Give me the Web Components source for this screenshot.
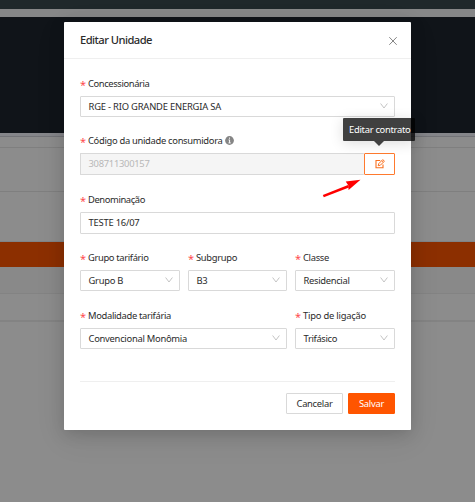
<!DOCTYPE html>
<html lang="pt-BR">
<head>
<meta charset="utf-8">
<title>Editar Unidade</title>
<style>
html,body{margin:0;height:100%;overflow:hidden}
body{font-family:"Noto Sans","Open Sans",sans-serif;font-size:9.4px;color:#2b2b2b;background:#8c8c8c}
</style>
</head>
<body>
<unit-page></unit-page>
<script>
const define = (name, html, init) => customElements.define(name, class extends HTMLElement {
  connectedCallback() {
    if (this.shadowRoot) return;
    const t = document.createElement('template');
    t.innerHTML = html;
    this.attachShadow({mode: 'open'}).append(t.content.cloneNode(true));
    if (init) init(this, this.shadowRoot);
  }
});

/* Text tracked so that it takes exactly the width given in "w". */
define('fit-text', `<style>:host{display:inline-block;white-space:nowrap;line-height:14px}span{display:inline-block}</style><span><slot></slot></span>`,
  (host, root) => {
    const s = root.querySelector('span'), w = +host.getAttribute('w');
    const natural = s.getBoundingClientRect().width;
    s.style.letterSpacing = (w - natural) / host.textContent.length + 'px';
    host.style.width = w + 'px';
  });

define('chevron-icon', `<style>:host{display:block;width:8px;height:6px}svg{display:block}</style>
<svg width="8" height="6" viewBox="0 0 8 6"><path d="M.6.5 4 5 7.4.5" fill="none" stroke="#bdbdbd" stroke-width=".9"/></svg>`);

define('select-box', `<style>:host{display:flex;box-sizing:border-box;height:21px;border:1px solid #d9d9d9;border-radius:1px;padding:3px 6px 0 7.5px;justify-content:space-between;background:#fff}
chevron-icon{margin-top:3px}</style><slot></slot><chevron-icon></chevron-icon>`);

define('text-box', `<style>:host{display:block;box-sizing:border-box;height:22px;border:1px solid #d9d9d9;border-radius:1px;padding:3px 7.5px 0;background:#fff}
:host([disabled]){background:#f5f5f5;color:#b8b8b8}</style><slot></slot>`);

define('form-field', `<style>:host{display:block;min-width:0}.l{display:flex;height:14px;margin-bottom:5px}
.s{width:8px;flex:none;color:#ff4d4f;line-height:15px;font-size:11px}</style>
<div class="l"><span class="s">*</span><slot name="label"></slot></div><slot></slot>`);

define('info-icon', `<style>:host{display:block;margin:2px 0 0 2px}svg{display:block}</style>
<svg width="9" height="9" viewBox="0 0 9 9"><circle cx="4.5" cy="4.5" r="4.4" fill="#858585"/><path d="M4.5 1.6v1.1M3.6 3.9h1v2.9M3.5 6.9h2.2" stroke="#fff" stroke-width="1" fill="none"/></svg>`);

define('tool-tip', `<style>:host{position:absolute;left:-22px;top:-36px;width:72px;height:23px;box-sizing:border-box;padding:5px 0 0 6px;background:rgba(0,0,0,.75);color:#fff;border-radius:1px;box-shadow:0 2px 14px rgba(0,0,0,.14);z-index:2}
:host::after{content:"";position:absolute;left:31px;top:23px;border:5px solid transparent;border-top-color:#404040;border-bottom:0}</style><slot></slot>`);

define('edit-button', `<style>:host{display:flex;position:relative;box-sizing:border-box;width:31px;height:22px;border:1px solid #ff7a2e;border-radius:1px;background:#fff;align-items:center;justify-content:center}
svg{display:block}.a{position:absolute;left:-44px;top:24px}</style>
<svg width="10" height="10" viewBox="0 0 10 10" fill="none" stroke="#f9701f"><path d="M5.2 1.5H1v7.3h7V5.4" stroke-width="1.1"/><path d="M3.2 6.7 3.8 4.6 7.8.6 9.4 2.2 5.4 6.2Z" stroke-width="1"/><path d="M6.7 1.7 8.3 3.3"  stroke-width=".8"/></svg>
<svg class="a" width="42" height="24" viewBox="0 0 42 24"><path d="M2.3 18.1 27.5 8.2" stroke="#f00" stroke-width="2.6"/><path d="M39.5 1.7 24.7 3.5 27.2 7.2 27.6 12.1Z" fill="#f00"/></svg>
<slot></slot>`);

define('push-button', `<style>:host{display:block;box-sizing:border-box;height:21px;border:1px solid #d9d9d9;border-radius:1px;padding:3px 0 0 9.5px;background:#fff;width:57px}
:host([primary]){background:#ff5500;border-color:#ff5500;color:#fff;width:47px;padding-left:10px}</style><slot></slot>`);

define('unit-modal', `<style>
:host{position:absolute;left:64px;top:22px;width:347px;height:408px;background:#fff;border-radius:1px;box-shadow:0 4px 16px rgba(0,0,0,.15),0 8px 32px rgba(0,0,0,.08)}
header{display:flex;box-sizing:border-box;height:37px;border-bottom:1px solid #efefef;padding:11px 13px 0 16px;justify-content:space-between;font-size:11.2px;font-weight:500}
header svg{margin-top:3px}
main{display:grid;grid-template-columns:100px 99px 100px;column-gap:8px;padding:18px 16px 0}
form-field{grid-column:span 3}.one{grid-column:span 1}.two{grid-column:span 2}
.r1{height:57px}.r2{height:59px}.r3{height:58px}.r4{height:58px}
.g{display:grid;grid-template-columns:284px 31px}
.g text-box{border-right:0}
footer{display:flex;justify-content:flex-end;gap:5px;margin:32px 16px 0;border-top:1px solid #efefef;padding-top:11px}
</style>
<header><fit-text w="72">Editar Unidade</fit-text><svg width="10" height="10" viewBox="0 0 10 10"><path d="M1.3 1.2 8.7 8.8M8.7 1.2 1.3 8.8" stroke="#858585" stroke-width="1"/></svg></header>
<main>
<form-field class="r1"><fit-text slot="label" w="61.5">Concessionária</fit-text><select-box><fit-text w="132.5">RGE - RIO GRANDE ENERGIA SA</fit-text></select-box></form-field>
<form-field class="r2"><fit-text slot="label" w="134.5">Código da unidade consumidora</fit-text><info-icon slot="label"></info-icon><div class="g"><text-box disabled><fit-text w="61">308711300157</fit-text></text-box><edit-button><tool-tip><fit-text w="61.5">Editar contrato</fit-text></tool-tip></edit-button></div></form-field>
<form-field class="r3"><fit-text slot="label" w="57">Denominação</fit-text><text-box><fit-text w="51">TESTE 16/07</fit-text></text-box></form-field>
<form-field class="one r4"><fit-text slot="label" w="60.5">Grupo tarifário</fit-text><select-box><fit-text w="34.5">Grupo B</fit-text></select-box></form-field>
<form-field class="one r4"><fit-text slot="label" w="41">Subgrupo</fit-text><select-box><fit-text w="11">B3</fit-text></select-box></form-field>
<form-field class="one r4"><fit-text slot="label" w="26">Classe</fit-text><select-box><fit-text w="46">Residencial</fit-text></select-box></form-field>
<form-field class="two"><fit-text slot="label" w="83">Modalidade tarifária</fit-text><select-box><fit-text w="98.5">Convencional Monômia</fit-text></select-box></form-field>
<form-field class="one"><fit-text slot="label" w="63">Tipo de ligação</fit-text><select-box><fit-text w="33.5">Trifásico</fit-text></select-box></form-field>
</main>
<footer><push-button><fit-text w="36">Cancelar</fit-text></push-button><push-button primary><fit-text w="25">Salvar</fit-text></push-button></footer>`);

define('page-backdrop', `<style>:host{display:flex;flex-direction:column;height:502px;background:#8c8c8c}
div{flex:none}</style>
<div style="height:9px;background:#1f282b"></div>
<div style="height:8px;background:#868788"></div>
<div style="height:116px;background:#101419"></div>
<div style="height:3px;background:#85868a"></div>
<div style="height:1px;background:#737478"></div>
<div style="height:10px"></div>
<div style="height:1px;background:#7f7f7f"></div>
<div style="height:43px"></div>
<div style="height:1px;background:#7f7f7f"></div>
<div style="height:49px"></div>
<div style="height:1px;background:#808386"></div>
<div style="height:25px;background:#8c2f00"></div>
<div style="height:26px;background:#898989"></div>
<div style="height:1px;background:#838383"></div>
<div style="height:26px"></div>
<div style="height:2px;background:#838383"></div>`);

define('unit-page', `<style>:host{display:block;position:relative;width:475px;height:502px;overflow:hidden}</style><page-backdrop></page-backdrop><unit-modal></unit-modal>`);
</script>
</body>
</html>
